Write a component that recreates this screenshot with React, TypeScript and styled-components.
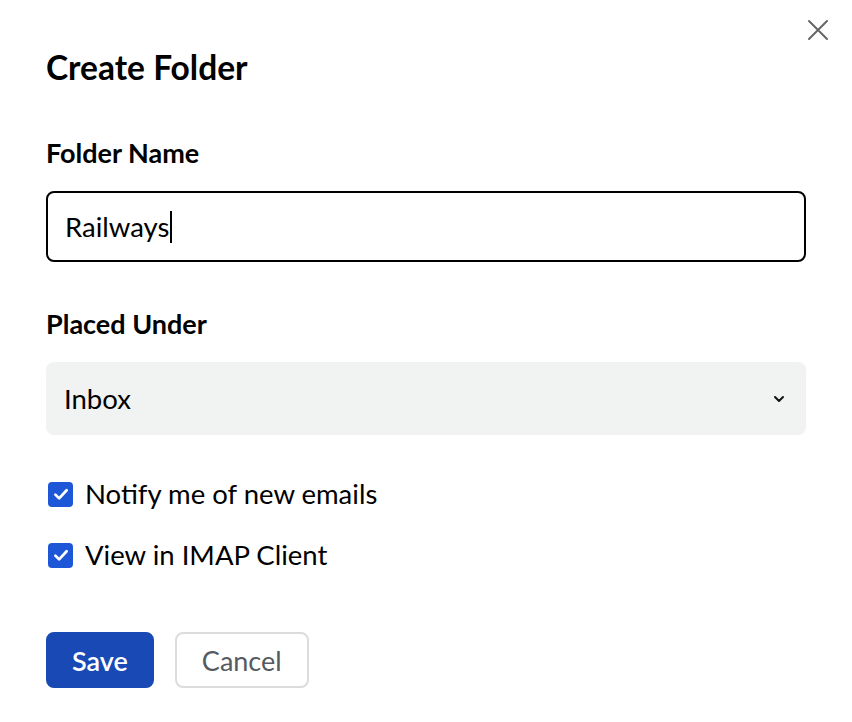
import React from "react";
import styled, { createGlobalStyle } from "styled-components";

const Global = createGlobalStyle`
  body { margin: 0; background: #fff; font-family: Lato, "Open Sans", sans-serif; color: #000; }
`;

export default function App() {
  return (
    <>
      <Global />
      <Dialog>
        <CloseButton aria-label="Close">
          <svg width="24" height="24" viewBox="0 0 24 24" fill="none" stroke="#666" strokeWidth="2" strokeLinecap="round">
            <path d="M3 3l18 18M21 3L3 21" />
          </svg>
        </CloseButton>
        <Title>Create Folder</Title>
        <Label>Folder Name</Label>
        <TextBox>
          Railways<Caret />
        </TextBox>
        <Label>Placed Under</Label>
        <Select>
          Inbox
          <svg width="14" height="14" viewBox="0 0 14 14" fill="none" stroke="#111" strokeWidth="2" strokeLinecap="round" strokeLinejoin="round">
            <path d="M3 5l4 4 4-4" />
          </svg>
        </Select>
        <Checks>
          <CheckRow>
            <Box>
              <svg width="20" height="20" viewBox="0 0 16 16" fill="none" stroke="#fff" strokeWidth="2.2" strokeLinecap="round" strokeLinejoin="round">
                <path d="M3.5 8.5l3 3 6-6.5" />
              </svg>
            </Box>
            Notify me of new emails
          </CheckRow>
          <CheckRow>
            <Box>
              <svg width="20" height="20" viewBox="0 0 16 16" fill="none" stroke="#fff" strokeWidth="2.2" strokeLinecap="round" strokeLinejoin="round">
                <path d="M3.5 8.5l3 3 6-6.5" />
              </svg>
            </Box>
            View in IMAP Client
          </CheckRow>
        </Checks>
        <Actions>
          <Button $primary>Save</Button>
          <Button>Cancel</Button>
        </Actions>
      </Dialog>
    </>
  );
}

const Dialog = styled.div`
  position: relative;
  display: flex;
  flex-direction: column;
  padding: 47px 46px 0 46px;
  width: 852px;
  box-sizing: border-box;
`;

const CloseButton = styled.button`
  position: absolute;
  top: 18px;
  right: 22px;
  border: none;
  background: none;
  padding: 0;
  display: flex;
`;

const Title = styled.h1`
  margin: 0 0 50px;
  font-size: 33.5px;
  font-weight: 700;
  line-height: 40px;
`;

const Label = styled.div`
  font-size: 27px;
  font-weight: 700;
  line-height: 32px;
  margin-bottom: 22px;
`;

const TextBox = styled.div`
  height: 71px;
  box-sizing: border-box;
  border: 2px solid #000;
  border-radius: 8px;
  display: flex;
  align-items: center;
  padding: 0 17px;
  font-size: 27.5px;
  margin-bottom: 46px;
`;

const Caret = styled.span`
  width: 2px;
  height: 32px;
  background: #000;
  margin-left: 1px;
`;

const Select = styled.div`
  height: 73px;
  box-sizing: border-box;
  background: #f1f2f2;
  border-radius: 8px;
  display: flex;
  align-items: center;
  justify-content: space-between;
  padding: 0 20px 0 18px;
  font-size: 27.5px;
`;

const Checks = styled.div`
  display: flex;
  flex-direction: column;
  gap: 29px;
  margin-top: 43px;
`;

const CheckRow = styled.label`
  display: flex;
  align-items: center;
  gap: 12px;
  font-size: 27.5px;
  line-height: 32px;
  padding-left: 2px;
`;

const Box = styled.span`
  width: 25px;
  height: 25px;
  border-radius: 4px;
  background: #1d57d8;
  display: flex;
  align-items: center;
  justify-content: center;
`;

const Actions = styled.div`
  display: flex;
  gap: 21px;
  margin-top: 61px;
`;

const Button = styled.button<{ $primary?: boolean }>`
  height: 56px;
  box-sizing: border-box;
  padding: 0 ${(p) => (p.$primary ? 24 : 25)}px;
  border-radius: 8px;
  font-family: Lato, sans-serif;
  font-size: 27px;
  border: 2px solid ${(p) => (p.$primary ? "#1849b5" : "#dcdcdc")};
  background: ${(p) => (p.$primary ? "#1849b5" : "#fff")};
  color: ${(p) => (p.$primary ? "#fff" : "#555a61")};
  font-weight: ${(p) => (p.$primary ? 600 : 400)};
`;
